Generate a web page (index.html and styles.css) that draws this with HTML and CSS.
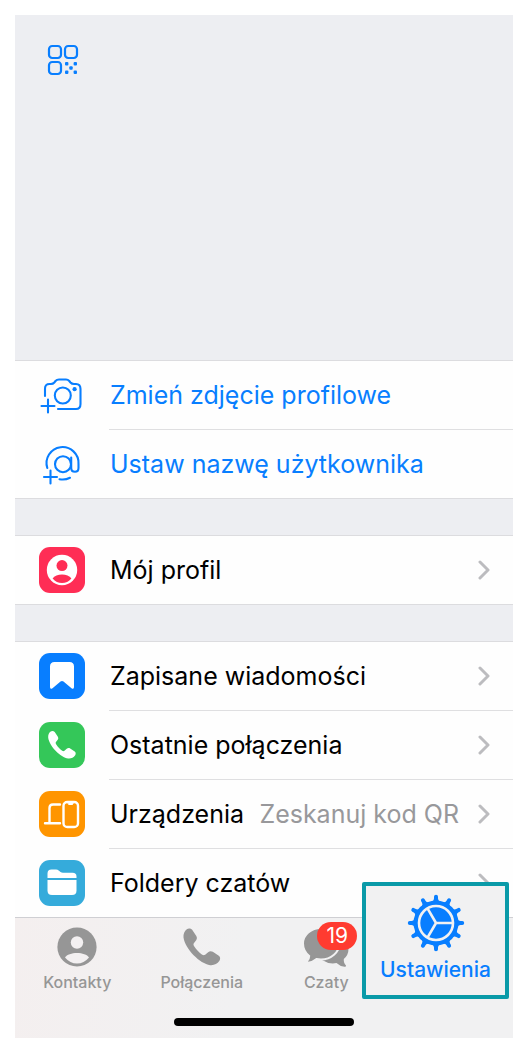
FILE: index.html
```html
<!DOCTYPE html>
<html lang="pl">
<head>
<meta charset="utf-8">
<meta name="viewport" content="width=device-width, initial-scale=1">
<title>Ustawienia</title>
<link rel="stylesheet" href="styles.css">
</head>
<body>
<svg class="defs" aria-hidden="true">
  <defs>
    <path id="handset" d="M10 2C14-1 22-1 26 4L38 22C41 27 41 31 38 35L31 44C29 47 30 50 33 55C39 64 47 72 56 79C60 81 62 81 65 79L74 71C78 68 83 67 88 70L106 82C111 86 111 92 108 97C101 107 92 111 80 110C50 106 5 62 0 27C-1 16 3 7 10 2Z"/>
    <path id="tooth" d="M-4-21.500Q-2-22.500-2-24.500V-26.200A2 2 0 0 1 2-26.200V-24.500Q2-22.500 4-21.500Z"/>
  </defs>
</svg>
<main class="screen">
  <header class="hero">
    <button class="qr" type="button" aria-label="Kod QR">
      <svg width="32" height="32" viewBox="0 0 32 32" fill="none" stroke="currentColor" stroke-width="2.200">
        <rect x="2" y="2" width="12" height="12" rx="3.2"/>
        <rect x="18" y="2" width="12" height="12" rx="3.2"/>
        <rect x="2" y="18" width="12" height="12" rx="3.2"/>
        <g fill="currentColor" stroke="none">
          <rect x="18" y="18" width="3.4" height="3.4" rx="1"/>
          <rect x="26.6" y="18" width="3.4" height="3.4" rx="1"/>
          <rect x="22.3" y="22.3" width="3.4" height="3.4" rx="1"/>
          <rect x="18" y="26.6" width="3.4" height="3.4" rx="1"/>
          <rect x="26.6" y="26.6" width="3.4" height="3.4" rx="1"/>
        </g>
      </svg>
    </button>
  </header>

  <section class="group">
    <button class="row action" type="button">
      <svg class="icon" width="46" height="46" viewBox="0 0 46 46" fill="none" stroke="currentColor" stroke-width="2.100" stroke-linecap="round">
        <path d="M6 24V16.500Q6 12 10.500 12H12Q14 12 15.300 10.500L16.500 9Q17.800 7.500 20 7.500H27Q29 7.500 30.300 9L31.500 10.500Q32.800 12 35 12H37Q41.500 12 41.500 17V32Q41.500 37 37 37H19"/>
        <circle cx="23.800" cy="23.500" r="8"/>
        <circle cx="35.600" cy="17.200" r="2.100" fill="currentColor" stroke="none"/>
        <path d="M9 27.500V40.500M2.500 34H15.500"/>
      </svg>
      <span class="label">Zmień zdjęcie profilowe</span>
    </button>
    <button class="row action" type="button">
      <svg class="icon" width="46" height="46" viewBox="0 0 46 46" fill="none" stroke="currentColor" stroke-width="2.100" stroke-linecap="round">
        <path d="M8.300 27A16 16 0 1 1 39.500 23V27Q39.500 30.800 36 30.800Q32.200 30.800 32.200 27V16.500M20.500 38.200Q26 39.300 31 36.800"/>
        <circle cx="24" cy="23.200" r="8"/>
        <path d="M11.500 29.500V42.500M5 36H18"/>
      </svg>
      <span class="label">Ustaw nazwę użytkownika</span>
    </button>
  </section>

  <section class="group">
    <button class="row" type="button">
      <svg class="icon tile-red" width="46" height="46" viewBox="0 0 46 46">
        <circle cx="23" cy="23" r="15.200" fill="#fff"/>
        <circle cx="23" cy="18.600" r="5.500" fill="currentColor"/>
        <path d="M13.600 31.500C17 26 29 26 32.400 31.500Q28.500 36 23 36T13.600 31.500Z" fill="currentColor"/>
      </svg>
      <span class="label">Mój profil</span>
      <svg class="chevron" width="12" height="20" viewBox="0 0 12 20"><path d="M2 2L10 10L2 18"/></svg>
    </button>
  </section>

  <section class="group">
    <button class="row" type="button">
      <svg class="icon tile-blue" width="46" height="46" viewBox="0 0 46 46">
        <path d="M11 13.500Q11 9 15.500 9H30.500Q35 9 35 13.500V34Q35 36.800 32.500 35.200L24.500 28.500Q23 27.300 21.500 28.500L13.500 35.200Q11 36.800 11 34Z" fill="#fff"/>
      </svg>
      <span class="label">Zapisane wiadomości</span>
      <svg class="chevron" width="12" height="20" viewBox="0 0 12 20"><path d="M2 2L10 10L2 18"/></svg>
    </button>
    <button class="row" type="button">
      <svg class="icon tile-green" width="46" height="46" viewBox="0 0 46 46">
        <use href="#handset" transform="translate(9.200 9) scale(.25)" fill="#fff"/>
      </svg>
      <span class="label">Ostatnie połączenia</span>
      <svg class="chevron" width="12" height="20" viewBox="0 0 12 20"><path d="M2 2L10 10L2 18"/></svg>
    </button>
    <button class="row" type="button">
      <svg class="icon tile-orange" width="46" height="46" viewBox="0 0 46 46" fill="none" stroke="#fff" stroke-width="2.400" stroke-linecap="round" stroke-linejoin="round">
        <path d="M21 13.500H14Q10.500 13.500 10.500 17V31.500M6 32.200H21"/>
        <rect x="24.500" y="11" width="14.500" height="25" rx="3.800"/>
        <path d="M28.800 11H34.700L33.500 13.500H30Z" fill="#fff" stroke-width="1"/>
      </svg>
      <span class="label">Urządzenia</span>
      <span class="hint">Zeskanuj kod QR</span>
      <svg class="chevron" width="12" height="20" viewBox="0 0 12 20"><path d="M2 2L10 10L2 18"/></svg>
    </button>
    <button class="row" type="button">
      <svg class="icon tile-cyan" width="46" height="46" viewBox="0 0 46 46" fill="#fff">
        <path d="M8.500 18V13.500Q8.500 9.500 12.500 9.500H17Q18.500 9.500 20 10.800L21.500 12Q22.500 12.800 24 12.800H33.500Q37.500 12.800 37.500 16.500V18Z"/>
        <path d="M8.500 20H37.500V30.500Q37.500 35 33 35H13Q8.500 35 8.500 30.500Z"/>
      </svg>
      <span class="label">Foldery czatów</span>
      <svg class="chevron" width="12" height="20" viewBox="0 0 12 20"><path d="M2 2L10 10L2 18"/></svg>
    </button>
  </section>

  <footer class="dock">
    <nav class="tabs">
      <a class="tab" href="#kontakty">
        <svg width="48" height="42" viewBox="0 0 48 42">
          <circle cx="24" cy="21" r="19.600" fill="currentColor"/>
          <circle cx="24" cy="16.500" r="6.200" fill="#f3f0f1"/>
          <path d="M12 31.500C15.500 25.500 32.500 25.500 36 31.500Q31 37.500 24 37.500T12 31.500Z" fill="#f3f0f1"/>
        </svg>
        <span>Kontakty</span>
      </a>
      <a class="tab" href="#polaczenia">
        <svg width="48" height="42" viewBox="0 0 48 42">
          <use href="#handset" transform="translate(5.500 2.500) scale(.333)" fill="currentColor"/>
        </svg>
        <span>Połączenia</span>
      </a>
      <a class="tab" href="#czaty">
        <svg width="48" height="42" viewBox="0 0 48 42">
          <path d="M30 7C40 7 46.500 14 46.500 23Q46.500 29 41.800 33C41.500 36 42.500 38 44 39.500Q44.300 41 42.500 40.800Q38 40.300 34.500 37Q27 38.500 20 34Z" fill="currentColor"/>
          <path d="M19 2C29 2 37.500 9 37.500 17.500S29 33.500 19 33.500Q17 33.500 14.500 33Q10.500 36.500 6 36.700Q4.200 36.600 5 35.300Q7.200 33 7.200 30Q1 25 1 17.500C1 9 9 2 19 2Z" fill="currentColor" stroke="#f1f1f2" stroke-width="2"/>
        </svg>
        <span class="badge">19</span>
        <span>Czaty</span>
      </a>
    </nav>
    <a class="spotlight" href="#ustawienia" aria-current="page">
      <svg width="58" height="58" viewBox="-29 -29 58 58">
        <g fill="currentColor">
          <circle r="22.500"/>
          <use href="#tooth"/>
          <use href="#tooth" transform="rotate(30)"/>
          <use href="#tooth" transform="rotate(60)"/>
          <use href="#tooth" transform="rotate(90)"/>
          <use href="#tooth" transform="rotate(120)"/>
          <use href="#tooth" transform="rotate(150)"/>
          <use href="#tooth" transform="rotate(180)"/>
          <use href="#tooth" transform="rotate(210)"/>
          <use href="#tooth" transform="rotate(240)"/>
          <use href="#tooth" transform="rotate(270)"/>
          <use href="#tooth" transform="rotate(300)"/>
          <use href="#tooth" transform="rotate(330)"/>
        </g>
        <g fill="none" stroke="#f1f1f2" stroke-width="2.600">
          <circle r="17"/>
          <path d="M0 0H17M0 0L-8.500 14.700M0 0L-8.500-14.700"/>
        </g>
      </svg>
      <span>Ustawienia</span>
    </a>
    <div class="home-bar"></div>
  </footer>
</main>
</body>
</html>
```
FILE: styles.css
```css
* {
  box-sizing: border-box;
}

body {
  margin: 0;
  background: #fff;
  color: #000;
  font-family: Inter, "Liberation Sans", sans-serif;
}

.defs {
  position: absolute;
  width: 0;
  height: 0;
}

.screen {
  margin: 15px 12px 20px 15px;
  background: #edeef2;
}

.hero {
  padding: 29px 32px 284px;
}

.qr {
  display: block;
  width: 32px;
  height: 32px;
  padding: 0;
  border: 0;
  background: none;
  color: #087eff;
}

.qr svg {
  display: block;
}

.group {
  border-top: 1px solid #dcdcdf;
  border-bottom: 1px solid #dcdcdf;
  background: #fefefe;
}

.group + .group {
  margin-top: 36px;
}

.group:nth-of-type(3) {
  border-bottom: 0;
}

.row {
  position: relative;
  display: flex;
  align-items: center;
  width: 100%;
  padding: 11px 23px 11px 24px;
  border: 0;
  background: none;
  color: #000;
  font: inherit;
  font-size: 25px;
  line-height: 32px;
  text-align: left;
}

.row + .row {
  margin-top: 1px;
}

.row + .row::before {
  content: "";
  position: absolute;
  top: -1px;
  left: 94px;
  right: 0;
  height: 1px;
  background: #dfdfe1;
}

.row.action {
  color: #087eff;
}

.icon {
  flex: none;
  margin-right: 25px;
  border-radius: 11px;
}

.label {
  flex: 1;
  white-space: nowrap;
}

.hint {
  margin-right: 19px;
  color: #98989b;
  white-space: nowrap;
}

.chevron {
  flex: none;
  fill: none;
  stroke: #bcbcbf;
  stroke-width: 3;
  stroke-linecap: round;
  stroke-linejoin: round;
}

.tile-red { background: #ff2d55; color: #ff2d55; }
.tile-blue { background: #087eff; }
.tile-green { background: #34c759; }
.tile-orange { background: #ff9500; }
.tile-cyan { background: #35abdb; }

.dock {
  position: relative;
  padding: 8px 0 12px;
  border-top: 1px solid #cfcfd3;
  background: linear-gradient(100deg, #f4efef, #f1f1f2 45%);
}

.tabs {
  display: grid;
  grid-template-columns: repeat(4, 1fr);
}

.tab {
  position: relative;
  display: flex;
  flex-direction: column;
  align-items: center;
  gap: 4px;
  color: #969696;
  font-size: 16px;
  font-weight: 500;
  line-height: 20px;
  text-decoration: none;
}

.badge {
  position: absolute;
  top: -4px;
  left: 50%;
  min-width: 40px;
  margin-left: -9px;
  padding: 0 8px;
  border-radius: 14px;
  background: #ff3b30;
  color: #fff;
  font-size: 21px;
  font-weight: 400;
  line-height: 28px;
  text-align: center;
}

.spotlight {
  position: absolute;
  top: -36px;
  right: 4px;
  display: flex;
  flex-direction: column;
  align-items: center;
  width: 147px;
  padding: 8px 0 13px;
  border: 4px solid #0a9aa8;
  border-radius: 2px;
  background: #f1f1f2;
  color: #087eff;
  font-size: 21px;
  font-weight: 500;
  gap: 6px;
  line-height: 24px;
  text-decoration: none;
}

.home-bar {
  width: 36%;
  height: 8px;
  margin: 26px auto 0;
  border-radius: 4px;
  background: #000;
}
```
